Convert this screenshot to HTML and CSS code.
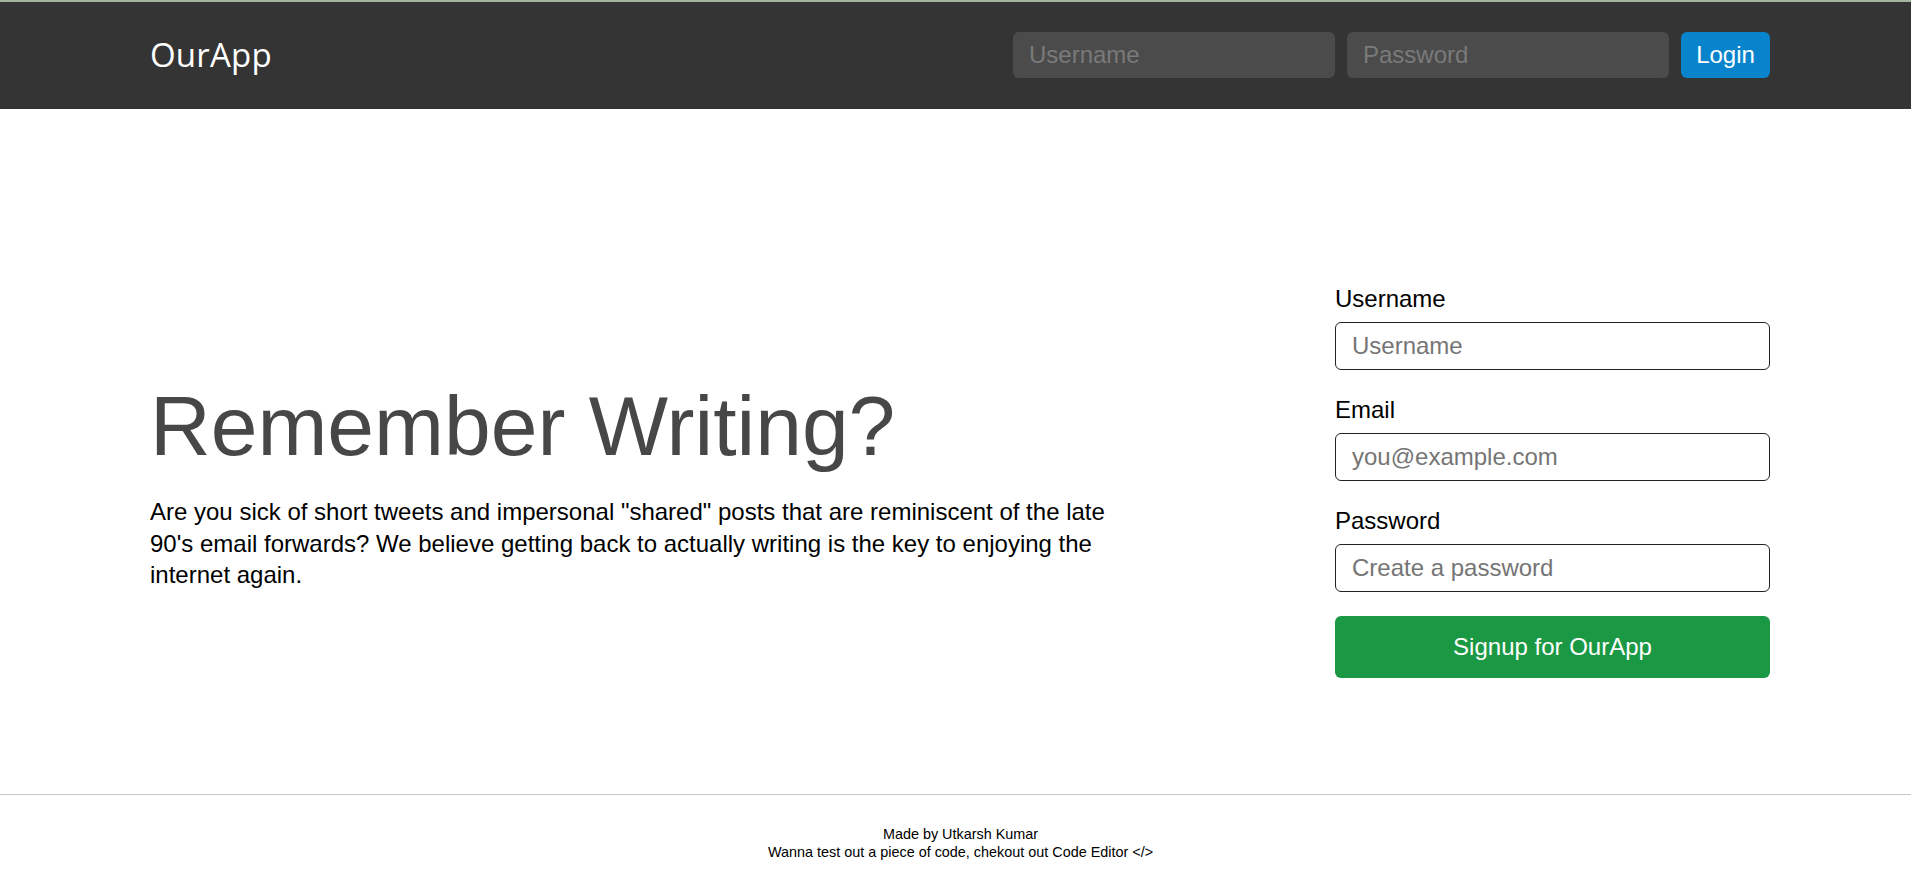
FILE: index.html
```html
<!DOCTYPE html>
<html lang="en">
<head>
<meta charset="utf-8">
<title>OurApp</title>
<link rel="stylesheet" href="styles.css">
</head>
<body>
<header class="topbar">
  <div class="container bar-inner">
    <a class="brand" href="#">OurApp</a>
    <form class="login-form">
      <input class="dark-input" type="text" placeholder="Username">
      <input class="dark-input" type="password" placeholder="Password">
      <button class="btn-login" type="button">Login</button>
    </form>
  </div>
</header>
<main class="hero">
  <div class="container hero-row">
    <div class="intro">
      <h1 class="title">Remember Writing?</h1>
      <p class="lead">Are you sick of short tweets and impersonal "shared" posts that are reminiscent of the late 90's email forwards? We believe getting back to actually writing is the key to enjoying the internet again.</p>
    </div>
    <form class="signup">
      <div class="group">
        <label class="label">Username</label>
        <input class="field" type="text" placeholder="Username">
      </div>
      <div class="group">
        <label class="label">Email</label>
        <input class="field" type="text" placeholder="you@example.com">
      </div>
      <div class="group last">
        <label class="label">Password</label>
        <input class="field" type="password" placeholder="Create a password">
      </div>
      <button class="btn-signup" type="button">Signup for OurApp</button>
    </form>
  </div>
</main>
<footer class="footer">
  <p class="foot-line">Made by Utkarsh Kumar</p>
  <p class="foot-line">Wanna test out a piece of code, chekout out Code Editor &lt;/&gt;</p>
</footer>
</body>
</html>
```

FILE: styles.css
```css
* { box-sizing: border-box; }
html, body { margin: 0; padding: 0; }
body {
  font-family: "Liberation Sans", Arial, sans-serif;
  color: #000;
  background: #fff;
  height: 892px;
  overflow: hidden;
}
.container {
  width: 1620px;
  margin-left: 150px;
}
.topbar {
  background: #343434;
  border-top: 2px solid #a3b59e;
  height: 109px;
}
.bar-inner {
  display: flex;
  align-items: center;
  justify-content: space-between;
  height: 107px;
}
.brand {
  font-family: "Open Sans", sans-serif;
  font-size: 33px;
  letter-spacing: 0.2px;
  color: #fff;
  text-decoration: none;
  margin-top: -3px;
}
.login-form {
  display: flex;
  gap: 12px;
  align-items: center;
  margin-top: -2px;
}
.dark-input {
  width: 322px;
  height: 46px;
  background: #4b4b4b;
  border: none;
  border-radius: 6px;
  padding: 0 16px;
  font-family: "Liberation Sans", Arial, sans-serif;
  font-size: 24px;
  color: #fff;
  outline: none;
}
.dark-input::placeholder { color: #7a7a7a; }
.btn-login {
  height: 46px;
  width: 89px;
  background: #0784cc;
  color: #fff;
  border: none;
  border-radius: 6px;
  font-family: "Liberation Sans", Arial, sans-serif;
  font-size: 24px;
  padding: 0;
}
.hero {
  padding-top: 172px;
  height: 685px;
}
.hero-row {
  display: flex;
  justify-content: space-between;
  align-items: center;
}
.intro {
  width: 975px;
  margin-top: 9px;
}
.title {
  font-size: 84px;
  font-weight: 400;
  line-height: 98px;
  color: #474747;
  margin: 0 0 21px;
}
.lead {
  font-size: 24px;
  line-height: 31.5px;
  margin: 0;
}
.signup {
  width: 435px;
}
.group { margin-bottom: 22px; }
.group.last { margin-bottom: 24px; }
.label {
  display: block;
  font-size: 24px;
  line-height: 36px;
  margin-bottom: 5px;
}
.field {
  display: block;
  width: 100%;
  height: 48px;
  border: 1px solid #222;
  border-radius: 6px;
  padding: 0 16px;
  font-family: "Liberation Sans", Arial, sans-serif;
  font-size: 24px;
  outline: none;
}
.field::placeholder { color: #757575; }
.btn-signup {
  display: block;
  width: 100%;
  height: 62px;
  background: #1a9843;
  color: #fff;
  border: none;
  border-radius: 6px;
  font-family: "Liberation Sans", Arial, sans-serif;
  font-size: 24px;
}
.footer {
  border-top: 1px solid #c8c8c8;
  padding-top: 30px;
  text-align: center;
  padding-left: 10px;
}
.foot-line {
  margin: 0;
  font-size: 14.4px;
  line-height: 18px;
}
```
